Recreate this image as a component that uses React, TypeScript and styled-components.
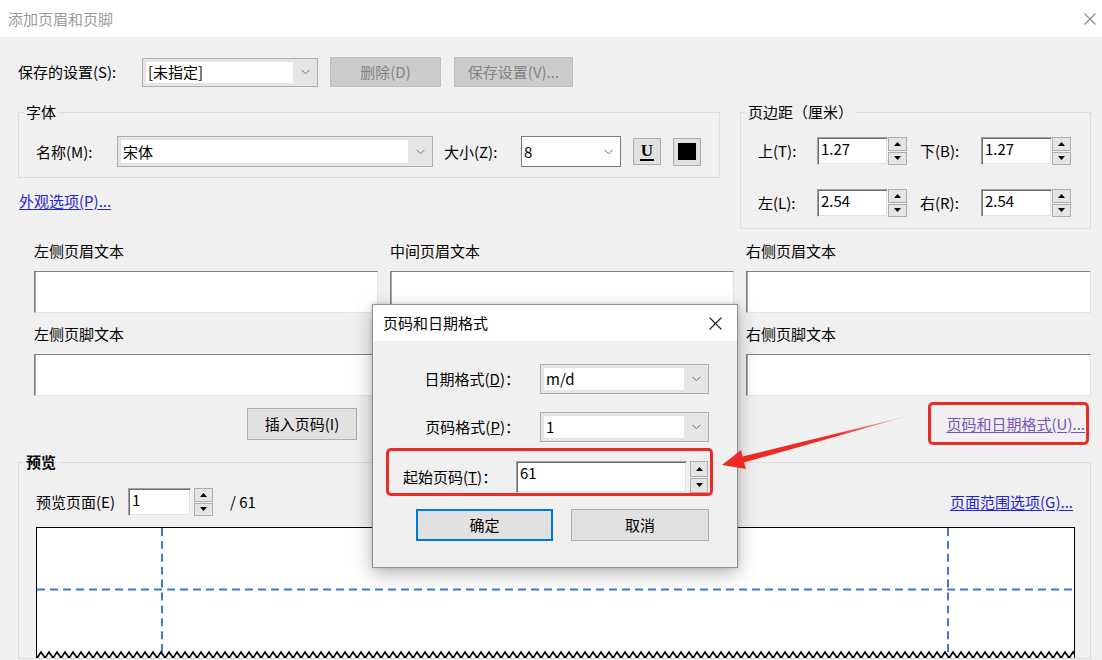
import React from "react";
import styled, { createGlobalStyle } from "styled-components";

const FONT = `"Noto Sans CJK SC", "Noto Sans", "DejaVu Sans", sans-serif`;

const GlobalStyle = createGlobalStyle`
  html, body { margin: 0; padding: 0; background: #f0f0f0; }
  body { font-family: ${FONT}; font-size: 15px; color: #000; }
  * { box-sizing: border-box; }
`;

const Window = styled.div`
  position: relative;
  width: 1102px;
  height: 660px;
  overflow: hidden;
  background: #f0f0f0;
  font-family: ${FONT};
  font-size: 15px;
  line-height: 20px;
  color: #000;
`;

const TitleBar = styled.div<{ $inactive?: boolean; $h: number; $pl: number; $pr: number }>`
  height: ${(p) => p.$h}px;
  background: #fff;
  display: flex;
  align-items: center;
  justify-content: space-between;
  padding: 0 ${(p) => p.$pr}px 0 ${(p) => p.$pl}px;
  color: ${(p) => (p.$inactive ? "#9a9a9a" : "#000")};
`;

const Body = styled.div`
  padding: 20px 11px 0 18px;
`;

const Row = styled.div<{ $gap?: number; $mt?: number; $pl?: number; $justify?: string }>`
  display: flex;
  align-items: center;
  gap: ${(p) => p.$gap ?? 0}px;
  margin-top: ${(p) => p.$mt ?? 0}px;
  padding-left: ${(p) => p.$pl ?? 0}px;
  justify-content: ${(p) => p.$justify ?? "flex-start"};
`;

const Label = styled.span<{ $w?: number; $right?: boolean }>`
  flex: none;
  width: ${(p) => (p.$w ? `${p.$w}px` : "auto")};
  white-space: nowrap;
  text-align: ${(p) => (p.$right ? "right" : "left")};
`;

const ComboBox = styled.div<{ $w: number; $h: number; $plain?: boolean }>`
  flex: none;
  width: ${(p) => p.$w}px;
  height: ${(p) => p.$h}px;
  display: flex;
  align-items: stretch;
  border: 1px solid ${(p) => (p.$plain ? "#7a7a7a" : "#adadad")};
  background: ${(p) => (p.$plain ? "#fff" : "#e5e5e5")};
  padding: ${(p) => (p.$plain ? "0" : "3px 0 3px 3px")};
`;

const ComboField = styled.div`
  flex: 1;
  background: #fff;
  padding-left: 2px;
  display: flex;
  align-items: center;
  white-space: nowrap;
  overflow: hidden;
`;

const ComboArrow = styled.div`
  width: 24px;
  flex: none;
  display: flex;
  align-items: center;
  justify-content: center;
`;

const EditBox = styled.div<{ $w: number; $h: number }>`
  flex: none;
  width: ${(p) => p.$w}px;
  height: ${(p) => p.$h}px;
  background: #fff;
  border: 1px solid;
  border-color: #a0a0a0 #f4f4f4 #f4f4f4 #a0a0a0;
  box-shadow: inset 1px 1px 0 #6e6e6e, inset -1px -1px 0 #e3e3e3;
  padding: 1px 3px;
  white-space: nowrap;
`;

const Spinner = styled.div<{ $h: number; $w?: number }>`
  flex: none;
  width: ${(p) => p.$w ?? 19}px;
  height: ${(p) => p.$h}px;
  display: flex;
  flex-direction: column;
  gap: 1px;
`;

const SpinBtn = styled.div`
  flex: 1;
  border: 1px solid #adadad;
  background: #e5e5e5;
  display: flex;
  align-items: center;
  justify-content: center;
`;

const Button = styled.button<{ $w: number; $h: number; $disabled?: boolean; $default?: boolean }>`
  flex: none;
  width: ${(p) => p.$w}px;
  height: ${(p) => p.$h}px;
  font-family: ${FONT};
  font-size: 15px;
  line-height: 20px;
  padding: 0;
  background: ${(p) => (p.$disabled ? "#cccccc" : "#e1e1e1")};
  color: ${(p) => (p.$disabled ? "#838383" : "#000")};
  border: ${(p) => (p.$default ? "2px solid #0078d7" : p.$disabled ? "1px solid #bfbfbf" : "1px solid #adadad")};
`;

const ToolButton = styled.div<{ $h: number }>`
  flex: none;
  width: 28px;
  height: ${(p) => p.$h}px;
  background: #e1e1e1;
  border: 1px solid #adadad;
  display: flex;
  align-items: center;
  justify-content: center;
`;

const UGlyph = styled.span`
  font-family: "Liberation Serif", "DejaVu Serif", serif;
  font-weight: 700;
  font-size: 17px;
  line-height: 15px;
  padding: 0 1px 1px;
  border-bottom: 2px solid #000;
  margin-top: 1px;
`;

const ColorSwatch = styled.div`
  width: 18px;
  height: 17px;
  background: #000;
`;

const LinkText = styled.a<{ $visited?: boolean }>`
  color: ${(p) => (p.$visited ? "#7b52b8" : "#2323d8")};
  text-decoration: underline;
  text-underline-offset: 2px;
  white-space: nowrap;
  cursor: pointer;
`;

const Group = styled.fieldset<{ $w: number; $pt: number; $pb: number }>`
  flex: none;
  margin: 0;
  width: ${(p) => p.$w}px;
  border: 1px solid #dcdcdc;
  padding: ${(p) => p.$pt}px 17px ${(p) => p.$pb}px;
  min-width: 0;
`;

const GroupLegend = styled.legend<{ $bold?: boolean }>`
  padding: 0 2px;
  margin-left: -12px;
  line-height: 16px;
  font-weight: ${(p) => (p.$bold ? 700 : 400)};
`;

const TopSection = styled.div`
  display: flex;
  align-items: flex-start;
  gap: 20px;
  margin-top: 17px;
`;

const FontColumn = styled.div`
  display: flex;
  flex-direction: column;
  width: 702px;
`;

const LinkLine = styled.div`
  margin-top: 15px;
  padding-left: 1px;
  line-height: 16px;
`;

const TextGrid = styled.div`
  display: grid;
  grid-template-columns: 344px 344px 345px;
  column-gap: 12px;
  row-gap: 11px;
  margin-top: 12px;
  padding-left: 16px;
`;

const TextCell = styled.div`
  display: flex;
  flex-direction: column;
  gap: 10px;
`;

const TextArea = styled.div`
  height: 42px;
  background: #fff;
  border: 1px solid;
  border-color: #828282 #e3e3e3 #e3e3e3 #828282;
  box-shadow: inset 1px 0 0 #a8a8a8;
`;

const InsertRow = styled.div`
  display: flex;
  align-items: center;
  margin-top: 12px;
  padding: 0 6px 0 229px;
  justify-content: space-between;
`;

const PreviewWrap = styled.div`
  margin-top: 14px;
`;

const PreviewCanvas = styled.div`
  width: 1039px;
  height: 131px;
  margin-top: 11px;
  margin-right: -2px;
  background: #fff;
  border: 1px solid #000;
  border-bottom: none;
  position: relative;
`;

const Fill = styled.svg`
  display: block;
  width: 100%;
  height: 100%;
`;

const Dialog = styled.div`
  position: absolute;
  left: 372px;
  top: 304px;
  width: 366px;
  height: 264px;
  background: #f0f0f0;
  border: 1px solid #8f8f8f;
  box-shadow: 0 6px 18px rgba(0, 0, 0, 0.28), 0 0 4px rgba(0, 0, 0, 0.15);
`;

const DialogBody = styled.div`
  padding: 23px 28px 0 0;
`;

const Highlight = styled.div<{ $l: number; $t: number; $w: number; $h: number }>`
  position: absolute;
  left: ${(p) => p.$l}px;
  top: ${(p) => p.$t}px;
  width: ${(p) => p.$w}px;
  height: ${(p) => p.$h}px;
  border: 3px solid #ec2b24;
  border-radius: 5px;
  pointer-events: none;
`;

const ArrowLayer = styled.svg`
  position: absolute;
  left: 0;
  top: 0;
  width: 1102px;
  height: 660px;
  pointer-events: none;
`;

const Chevron = () => (
  <svg width="9" height="6" viewBox="0 0 9 6">
    <polyline points="0.5,0.8 4.5,4.8 8.5,0.8" fill="none" stroke="#6b6b6b" strokeWidth="1" />
  </svg>
);

const Tri = ({ up }: { up?: boolean }) => (
  <svg width="7" height="4" viewBox="0 0 7 4">
    <polygon points={up ? "0,4 7,4 3.5,0" : "0,0 7,0 3.5,4"} fill="#000" />
  </svg>
);

const CloseX = ({ color, size }: { color: string; size: number }) => (
  <svg width={size} height={size} viewBox={`0 0 ${size} ${size}`}>
    <line x1="0.5" y1="0.5" x2={size - 0.5} y2={size - 0.5} stroke={color} strokeWidth="1.1" />
    <line x1={size - 0.5} y1="0.5" x2="0.5" y2={size - 0.5} stroke={color} strokeWidth="1.1" />
  </svg>
);

const Combo = ({ w, h, value, plain }: { w: number; h: number; value: string; plain?: boolean }) => (
  <ComboBox $w={w} $h={h} $plain={plain}>
    <ComboField>{value}</ComboField>
    <ComboArrow>
      <Chevron />
    </ComboArrow>
  </ComboBox>
);

const Spin = ({ h, w }: { h: number; w?: number }) => (
  <Spinner $h={h} $w={w}>
    <SpinBtn>
      <Tri up />
    </SpinBtn>
    <SpinBtn>
      <Tri />
    </SpinBtn>
  </Spinner>
);

const MarginField = ({ label, value, lw }: { label: string; value: string; lw: number }) => (
  <>
    <Label $w={lw}>{label}</Label>
    <EditBox $w={71} $h={28}>{value}</EditBox>
    <Spin h={28} />
  </>
);

const zigzag = (() => {
  let d = "M0 131";
  for (let x = 0; x < 1040; x += 8) {
    d += ` L${x + 4} 125 L${x + 8} 131`;
  }
  return d;
})();

const fields = ["左侧页眉文本", "中间页眉文本", "右侧页眉文本", "左侧页脚文本", "中间页脚文本", "右侧页脚文本"];

export default function App() {
  return (
    <>
      <GlobalStyle />
      <Window>
        <TitleBar $inactive $h={37} $pl={8} $pr={6}>
          <span>添加页眉和页脚</span>
          <CloseX color="#8a8a8a" size={12} />
        </TitleBar>
        <Body>
          <Row $gap={0}>
            <Label $w={124}>保存的设置(S):</Label>
            <Combo w={176} h={29} value="[未指定]" />
            <Row $gap={13} $pl={12}>
              <Button $w={111} $h={30} $disabled>
                删除(D)
              </Button>
              <Button $w={119} $h={30} $disabled>
                保存设置(V)...
              </Button>
            </Row>
          </Row>

          <TopSection>
            <FontColumn>
              <Group $w={702} $pt={16} $pb={10}>
                <GroupLegend>字体</GroupLegend>
                <Row>
                  <Label $w={81}>名称(M):</Label>
                  <Combo w={316} h={31} value="宋体" />
                  <Label $w={77} style={{ marginLeft: 11 }}>
                    大小(Z):
                  </Label>
                  <Combo w={100} h={31} value="8" plain />
                  <Row $gap={12} $pl={12}>
                    <ToolButton $h={27}>
                      <UGlyph>U</UGlyph>
                    </ToolButton>
                    <ToolButton $h={28}>
                      <ColorSwatch />
                    </ToolButton>
                  </Row>
                </Row>
              </Group>
              <LinkLine>
                <LinkText>外观选项(P)...</LinkText>
              </LinkLine>
            </FontColumn>

            <Group $w={351} $pt={17} $pb={11}>
              <GroupLegend>页边距（厘米）</GroupLegend>
              <Row $gap={0}>
                <MarginField label="上(T):" value="1.27" lw={59} />
                <Row $pl={13}>
                  <MarginField label="下(B):" value="1.27" lw={61} />
                </Row>
              </Row>
              <Row $mt={24}>
                <MarginField label="左(L):" value="2.54" lw={59} />
                <Row $pl={13}>
                  <MarginField label="右(R):" value="2.54" lw={61} />
                </Row>
              </Row>
            </Group>
          </TopSection>

          <TextGrid>
            {fields.map((f) => (
              <TextCell key={f}>
                <Label>{f}</Label>
                <TextArea />
              </TextCell>
            ))}
          </TextGrid>

          <InsertRow>
            <Button $w={110} $h={32}>
              插入页码(I)
            </Button>
            <LinkText $visited>页码和日期格式(U)...</LinkText>
          </InsertRow>

          <PreviewWrap>
            <Group $w={1073} $pt={18} $pb={0}>
              <GroupLegend $bold>预览</GroupLegend>
              <Row>
                <Label $w={92}>预览页面(E)</Label>
                <EditBox $w={63} $h={28}>1</EditBox>
                <Row $pl={3}>
                  <Spin h={28} />
                </Row>
                <Label style={{ marginLeft: 17 }}>/ 61</Label>
                <LinkText style={{ marginLeft: "auto" }}>页面范围选项(G)...</LinkText>
              </Row>
              <PreviewCanvas>
                <Fill viewBox="0 0 1037 131" preserveAspectRatio="none">
                  <g stroke="#3d7bd4" strokeWidth="2" strokeDasharray="8 5" fill="none">
                    <line x1="125" y1="0" x2="125" y2="131" />
                    <line x1="911" y1="0" x2="911" y2="131" />
                    <line x1="0" y1="62" x2="1037" y2="62" />
                  </g>
                  <path d={zigzag} fill="#fff" stroke="#000" strokeWidth="1.7" />
                </Fill>
              </PreviewCanvas>
            </Group>
          </PreviewWrap>
        </Body>

        <Highlight $l={928} $t={402} $w={161} $h={43} />

        <Dialog>
          <TitleBar $h={36} $pl={10} $pr={15}>
            <span>页码和日期格式</span>
            <CloseX color="#222" size={13} />
          </TitleBar>
          <DialogBody>
            <Row $justify="flex-end" $gap={20}>
              <Label>
                日期格式(<u>D</u>)：
              </Label>
              <Combo w={169} h={30} value="m/d" />
            </Row>
            <Row $justify="flex-end" $gap={20} $mt={18}>
              <Label>
                页码格式(<u>P</u>)：
              </Label>
              <Combo w={169} h={30} value="1" />
            </Row>
            <Row $mt={19} $pl={30}>
              <Label $w={113}>
                起始页码(<u>T</u>)：
              </Label>
              <EditBox $w={171} $h={32}>61</EditBox>
              <Row $pl={3}>
                <Spin h={32} w={18} />
              </Row>
            </Row>
            <Row $mt={16} $pl={43} $gap={18}>
              <Button $w={137} $h={32} $default>
                确定
              </Button>
              <Button $w={138} $h={32}>
                取消
              </Button>
            </Row>
          </DialogBody>
          <Highlight $l={13} $t={143} $w={327} $h={48} />
        </Dialog>

        <ArrowLayer viewBox="0 0 1102 660">
          <defs>
            <linearGradient id="arrowFade" x1="722" y1="465" x2="910" y2="415" gradientUnits="userSpaceOnUse">
              <stop offset="0" stopColor="#ec2b24" />
              <stop offset="0.6" stopColor="#ec2b24" />
              <stop offset="1" stopColor="#ec2b24" stopOpacity="0.15" />
            </linearGradient>
          </defs>
          <polygon
            points="722,465 746,469 744,462.5 910,415.5 742.5,456.5 741,450"
            fill="url(#arrowFade)"
          />
        </ArrowLayer>
      </Window>
    </>
  );
}
